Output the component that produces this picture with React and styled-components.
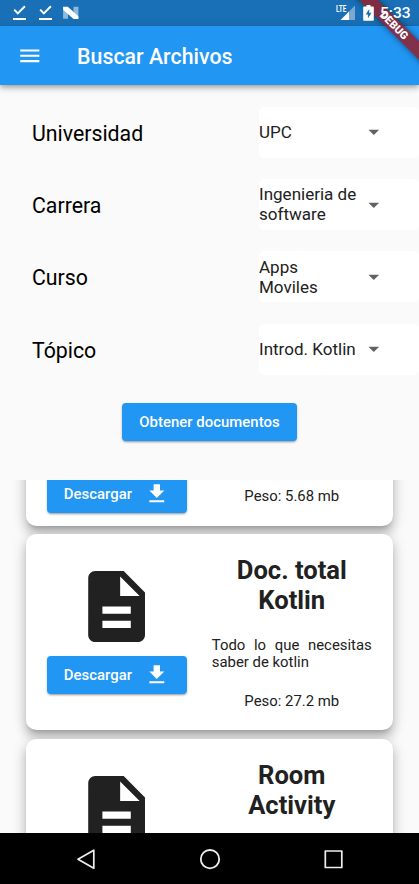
import React from "react";
import styled, { createGlobalStyle } from "styled-components";

const Global = createGlobalStyle`
  * { box-sizing: border-box; }
  html, body { margin: 0; padding: 0; background: #fafafa; }
  body { font-family: Roboto, "Liberation Sans", sans-serif; color: #212121; }
`;

const Screen = styled.div`
  position: relative;
  display: flex;
  flex-direction: column;
  width: 419px;
  height: 884px;
  overflow: hidden;
  background: #fafafa;
`;

const StatusBar = styled.header`
  display: flex;
  align-items: center;
  justify-content: space-between;
  flex: none;
  height: 26px;
  padding: 0 8.5px 0 12px;
  background: #1970b6;
  color: #fff;
`;

const StatusGroup = styled.div`
  display: flex;
  align-items: center;
  gap: ${(p) => p.$gap}px;
  z-index: 3;
`;

const Clock = styled.span`
  margin-left: -1px;
  font-size: 15.5px;
  line-height: 20px;
  font-weight: 500;
`;

const AppBar = styled.div`
  display: flex;
  align-items: center;
  flex: none;
  height: 59px;
  padding-left: 17px;
  gap: 34.5px;
  background: #2196f3;
  color: #fff;
  box-shadow: 0 2px 4px -1px rgba(0, 0, 0, 0.2), 0 4px 5px rgba(0, 0, 0, 0.14),
    0 1px 10px rgba(0, 0, 0, 0.12);
  z-index: 1;
`;

const Title = styled.h1`
  margin: 2px 0 0;
  font-size: 21.3px;
  line-height: 25px;
  font-weight: 500;
  letter-spacing: 0.03px;
`;

const Filters = styled.section`
  display: flex;
  flex-direction: column;
  align-items: center;
  flex: none;
  height: 395px;
  padding-top: 21.5px;
  gap: 21.3px;
`;

const FilterRow = styled.div`
  display: flex;
  align-items: center;
  justify-content: space-between;
  width: 100%;
  height: 51.1px;
  padding-left: 32px;
`;

const Label = styled.label`
  padding-top: 2px;
  font-size: 21.3px;
  line-height: 25px;
  color: #000;
`;

const Select = styled.div`
  display: flex;
  align-items: center;
  width: 160px;
  height: 51.1px;
  border-radius: 5px;
  background: #fff;
`;

const SelectValue = styled.span`
  width: 101.5px;
  font-size: 17.04px;
  line-height: 20px;
  color: #212121;
`;

const Button = styled.button`
  display: flex;
  align-items: center;
  justify-content: center;
  flex: none;
  gap: 12px;
  width: ${(p) => p.$width}px;
  height: 38.3px;
  margin: ${(p) => p.$top}px 0 0;
  padding: 0;
  border: 0;
  border-radius: 4px;
  background: #2196f3;
  color: #fff;
  font: 500 14.9px/18px Roboto, "Liberation Sans", sans-serif;
  box-shadow: 0 2px 2px -1px rgba(0, 0, 0, 0.25), 0 1px 3px rgba(0, 0, 0, 0.2);
`;

const ButtonText = styled.span`
  padding-top: 0.4px;
  letter-spacing: 0.03px;
`;

const List = styled.main`
  display: flex;
  flex-direction: column;
  flex: none;
  gap: 8.5px;
  height: 353px;
  padding: 0 26px;
  overflow: hidden;
`;

const Card = styled.article`
  display: flex;
  flex: none;
  gap: 25.5px;
  height: ${(p) => p.$height}px;
  margin-top: ${(p) => p.$offset || 0}px;
  padding-left: 21px;
  border-radius: 10.6px;
  background: #fff;
  box-shadow: 0 5px 5px -3px rgba(0, 0, 0, 0.2), 0 8px 10px 1px rgba(0, 0, 0, 0.14),
    0 3px 14px 2px rgba(0, 0, 0, 0.12);
`;

const FileColumn = styled.div`
  display: flex;
  flex-direction: column;
  align-items: center;
  width: 139.5px;
  padding-top: ${(p) => p.$top}px;
`;

const InfoColumn = styled.div`
  display: flex;
  flex-direction: column;
  align-items: center;
  width: 159.5px;
  padding-top: 21.3px;
`;

const DocTitle = styled.h2`
  min-height: 30px;
  margin: 0;
  font-size: 25.57px;
  line-height: 30px;
  font-weight: 700;
  text-align: center;
`;

const Description = styled.p`
  width: 160px;
  height: 34px;
  margin: 22px 0 21.7px;
  font-size: 14.9px;
  line-height: 17.1px;
  text-align: justify;
`;

const Weight = styled.span`
  font-size: 14.9px;
  line-height: 17px;
`;

const NavBar = styled.nav`
  display: flex;
  align-items: center;
  justify-content: space-between;
  flex: none;
  height: 51px;
  padding: 0 73px;
  background: #000;
  z-index: 1;
`;

const BannerClip = styled.div`
  position: absolute;
  top: 0;
  right: 0;
  width: 85px;
  height: 85px;
  overflow: hidden;
  pointer-events: none;
  z-index: 2;
`;

const Banner = styled.div`
  position: absolute;
  top: 19px;
  left: 0;
  width: 120px;
  height: 12.8px;
  background: rgba(140, 38, 55, 0.9);
  box-shadow: 0 0 6px rgba(0, 0, 0, 0.5);
  color: #fff;
  font-size: 10.9px;
  line-height: 13px;
  font-weight: 900;
  text-align: center;
  transform: rotate(45deg);
`;

const DownloadDone = () => (
  <svg width="26" height="26" viewBox="0 0 26 26" fill="none" stroke="#fff">
    <path d="M2.2 9.6 5.8 13.4 12.9 6.2" strokeWidth="2" />
    <path d="M1 19h13" strokeWidth="2" />
  </svg>
);

const NougatSvg = styled.svg`
  overflow: visible;
`;

const NougatIcon = () => (
  <NougatSvg width="17" height="26" viewBox="0 0 17 26">
    <path d="M-.9 7 4 10v8.800H-.9zM9.500 6.700h4.900v11.800L9.500 16z" fill="#8fb9dc" />
    <path d="M-.9 6.800h4.700L14.400 16.300V19H9.600L-.9 9.800z" fill="#fff" />
  </NougatSvg>
);

const SignalIcon = () => (
  <svg width="20" height="26" viewBox="0 0 20 26">
    <path d="M19 5.5v14.5h-6v-8.5z" fill="#79a9d3" />
    <path d="M13 11.5V20H4.5z" fill="#fff" />
    <text x="0" y="11.9" fill="#fff" fontSize="8.5" fontWeight="700" textLength="10.4" lengthAdjust="spacingAndGlyphs">LTE</text>
  </svg>
);

const BatteryIcon = () => (
  <svg width="11" height="26" viewBox="0 0 11 26">
    <path d="M3.5 5h4v1.6H10q.8 0 .8.8V20q0 .8-.8.8H1Q.2 20.800.2 20V7.400Q.2 6.600 1 6.600h2.500z" fill="#fff" />
    <path d="M6.200 9 2.700 14.500h2.200v4l3.500-5.700H6.200z" fill="#1970b6" />
  </svg>
);

const MenuIcon = () => (
  <svg width="25.6" height="25.6" viewBox="0 0 24 24" fill="#fff">
    <path d="M3 18h18v-2H3v2zm0-5h18v-2H3v2zm0-7v2h18V6H3z" />
  </svg>
);

const ArrowIcon = () => (
  <svg width="25.6" height="25.6" viewBox="0 0 24 24" fill="#616161">
    <path d="M7 10l5 5 5-5z" />
  </svg>
);

const FileIcon = () => (
  <svg width="85.2" height="85.2" viewBox="0 0 24 24" fill="#212121">
    <path d="M14 2H6c-1.100 0-1.990.9-1.990 2L4 20c0 1.100.89 2 1.990 2H18c1.100 0 2-.9 2-2V8l-6-6zm2 16H8v-2h8v2zm0-4H8v-2h8v2zm-3-5V3.500L18.500 9H13z" />
  </svg>
);

const DownloadIcon = () => (
  <svg width="25.6" height="25.6" viewBox="0 0 24 24" fill="#fff">
    <path d="M19 9h-4V3H9v6H5l7 7 7-7zM5 18v2h14v-2H5z" />
  </svg>
);

const filters = [
  ["Universidad", "UPC"],
  ["Carrera", "Ingenieria de software"],
  ["Curso", "Apps Moviles"],
  ["Tópico", "Introd. Kotlin"],
];

const documents = [
  { id: 1, title: "", description: "", weight: "5.68 mb", height: 166.5, offset: -121, top: 23.8 },
  { id: 2, title: "Doc. total Kotlin", description: "Todo lo que necesitas saber de kotlin", weight: "27.2 mb", height: 196, top: 30.3 },
  { id: 3, title: "Room Activity", description: "", weight: "", height: 196, top: 30.3 },
];

export default function App() {
  return (
    <Screen>
      <Global />
      <StatusBar>
        <StatusGroup $gap={0}>
          <DownloadDone />
          <DownloadDone />
          <NougatIcon />
        </StatusGroup>
        <StatusGroup $gap={7}>
          <SignalIcon />
          <BatteryIcon />
          <Clock>5:33</Clock>
        </StatusGroup>
      </StatusBar>
      <AppBar>
        <MenuIcon />
        <Title>Buscar Archivos</Title>
      </AppBar>
      <Filters>
        {filters.map(([label, value]) => (
          <FilterRow key={label}>
            <Label>{label}</Label>
            <Select>
              <SelectValue>{value}</SelectValue>
              <ArrowIcon />
            </Select>
          </FilterRow>
        ))}
        <Button $width={175} $top={7}>
          <ButtonText>Obtener documentos</ButtonText>
        </Button>
      </Filters>
      <List>
        {documents.map((doc) => (
          <Card key={doc.id} $height={doc.height} $offset={doc.offset}>
            <FileColumn $top={doc.top}>
              <FileIcon />
              <Button $width={139.5} $top={6.4}>
                <ButtonText>Descargar</ButtonText>
                <DownloadIcon />
              </Button>
            </FileColumn>
            <InfoColumn>
              <DocTitle>{doc.title}</DocTitle>
              <Description>{doc.description}</Description>
              {doc.weight && <Weight>Peso: {doc.weight}</Weight>}
            </InfoColumn>
          </Card>
        ))}
      </List>
      <NavBar>
        <svg width="26" height="26" viewBox="0 0 26 26" fill="none" stroke="#eee" strokeWidth="1.7" strokeLinejoin="round">
          <path d="M20.800 4.200v18L5 13.200z" />
        </svg>
        <svg width="26" height="26" viewBox="0 0 26 26" fill="none" stroke="#eee" strokeWidth="1.800">
          <circle cx="13" cy="13.200" r="9.200" />
        </svg>
        <svg width="26" height="26" viewBox="0 0 26 26" fill="none" stroke="#eee" strokeWidth="1.700" strokeLinejoin="round">
          <path d="M5.300 5h16.500v16.500H5.300z" />
        </svg>
      </NavBar>
      <BannerClip>
        <Banner>DEBUG</Banner>
      </BannerClip>
    </Screen>
  );
}
